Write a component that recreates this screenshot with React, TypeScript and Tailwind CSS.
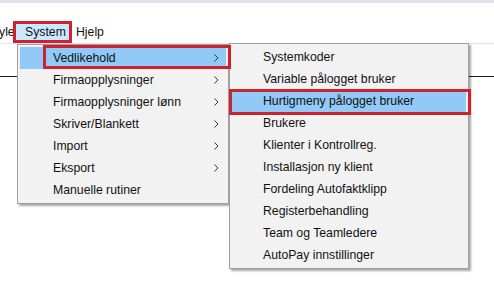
const mainItems = [
  { label: "Vedlikehold", sub: true, active: true },
  { label: "Firmaopplysninger", sub: true },
  { label: "Firmaopplysninger lønn", sub: true },
  { label: "Skriver/Blankett", sub: true },
  { label: "Import", sub: true },
  { label: "Eksport", sub: true },
  { label: "Manuelle rutiner", sub: false },
];

const subItems = [
  "Systemkoder",
  "Variable pålogget bruker",
  "Hurtigmeny pålogget bruker",
  "Brukere",
  "Klienter i Kontrollreg.",
  "Installasjon ny klient",
  "Fordeling Autofaktklipp",
  "Registerbehandling",
  "Team og Teamledere",
  "AutoPay innstillinger",
];

function Chevron() {
  return (
    <svg width="5" height="8" viewBox="0 0 5 8" className="shrink-0">
      <path d="M0.5 0.5 L4 4 L0.5 7.5" fill="none" stroke="#333" strokeWidth="1" />
    </svg>
  );
}

export default function App() {
  return (
    <div className="relative w-[494px] h-[285px] overflow-hidden bg-white text-[12.25px] text-[#111] font-['Segoe_UI','Liberation_Sans',sans-serif]">
      {/* window top */}
      <div className="h-[3px] bg-[#dfe4ea]" />

      {/* menubar */}
      <div className="h-[41px] flex items-end border-b border-[#e3e3e3]">
        <div className="flex h-[22px] items-center">
          <span className="w-[14px] -ml-[1px] leading-none">yle</span>
          <div className="w-[59px] h-[22px] border-[3px] border-[#cf2230] bg-[#cce8ff] flex items-center pl-[9px]">
            System
          </div>
          <span className="pl-[4px]">Hjelp</span>
        </div>
      </div>

      {/* content behind the menus */}
      <div className="mt-[32px] h-px bg-[#1a1a1a]" />

      {/* main dropdown */}
      <div className="absolute left-[17px] top-[44px] w-[212px] border border-[#a0a0a0] bg-[#f2f2f2] p-[2px] shadow-[2px_2px_2px_rgba(0,0,0,0.35)]">
        {mainItems.map((it) => (
          <div
            key={it.label}
            className={`h-[22px] flex items-center pl-[33px] pr-[7px] ${it.active ? "bg-[#91c9f7]" : ""}`}
          >
            <span className="flex-1">{it.label}</span>
            {it.sub && <Chevron />}
          </div>
        ))}
      </div>

      {/* submenu */}
      <div className="absolute left-[229px] top-[43px] w-[240px] border border-[#a0a0a0] bg-[#f2f2f2] p-[2px] shadow-[2px_2px_2px_rgba(0,0,0,0.35)]">
        {subItems.map((label, i) => (
          <div
            key={label}
            className={`h-[22px] flex items-center pl-[31px] ${i === 2 ? "bg-[#91c9f7]" : ""}`}
          >
            {label}
          </div>
        ))}
      </div>

      {/* annotation boxes */}
      <div className="absolute left-[43px] top-[45px] w-[188px] h-[24px] border-[3px] border-[#cf2230]" />
      <div className="absolute left-[229px] top-[89px] w-[242px] h-[26px] border-[3px] border-[#cf2230]" />
    </div>
  );
}
